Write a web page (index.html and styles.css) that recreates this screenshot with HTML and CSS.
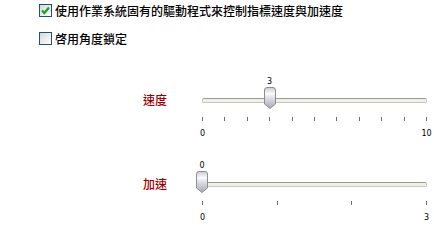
FILE: index.html
```html
<!DOCTYPE html>
<html lang="zh-Hant">
<head>
<meta charset="utf-8">
<title>指標設定</title>
<link rel="stylesheet" href="styles.css">
</head>
<body>
<div class="options">
  <label class="check-row">
    <span class="box checked">
      <svg width="11" height="11" viewBox="0 0 11 11"><path d="M2 5.5 L4.3 8 L9 2.5" fill="none" stroke="#1fa01f" stroke-width="2.2"/></svg>
    </span>
    <span class="check-text">使用作業系統固有的驅動程式來控制指標速度與加速度</span>
  </label>
  <label class="check-row">
    <span class="box"></span>
    <span class="check-text">啓用角度鎖定</span>
  </label>
</div>

<div class="sliders">
  <div class="slider-row">
    <div class="slider-label">速度</div>
    <div class="slider">
      <div class="value-row"><span class="value" style="left:30%">3</span></div>
      <div class="track-area">
        <div class="track"></div>
        <svg class="thumb" style="left:calc(30% - 6px)" width="12" height="22" viewBox="0 0 12 22">
          <defs>
            <linearGradient id="tg1" x1="0" y1="0" x2="0" y2="1">
              <stop offset="0" stop-color="#c9c9d2"/>
              <stop offset="0.3" stop-color="#fbfbfd"/>
              <stop offset="0.45" stop-color="#e4e4ea"/>
              <stop offset="1" stop-color="#a9a9b4"/>
            </linearGradient>
          </defs>
          <path d="M0.5 3 Q0.5 0.5 3 0.5 L9 0.5 Q11.5 0.5 11.5 3 L11.5 17 L6 21.5 L0.5 17 Z" fill="url(#tg1)" stroke="#8d8d98"/>
        </svg>
      </div>
      <div class="ticks">
        <i></i><i></i><i></i><i></i><i></i><i></i><i></i><i></i><i></i><i></i><i></i>
      </div>
      <div class="tick-labels"><span>0</span><span>10</span></div>
    </div>
  </div>

  <div class="slider-row">
    <div class="slider-label">加速</div>
    <div class="slider">
      <div class="value-row"><span class="value" style="left:0%">0</span></div>
      <div class="track-area">
        <div class="track"></div>
        <svg class="thumb" style="left:calc(0% - 6px)" width="12" height="22" viewBox="0 0 12 22">
          <defs>
            <linearGradient id="tg2" x1="0" y1="0" x2="0" y2="1">
              <stop offset="0" stop-color="#c9c9d2"/>
              <stop offset="0.3" stop-color="#fbfbfd"/>
              <stop offset="0.45" stop-color="#e4e4ea"/>
              <stop offset="1" stop-color="#a9a9b4"/>
            </linearGradient>
          </defs>
          <path d="M0.5 3 Q0.5 0.5 3 0.5 L9 0.5 Q11.5 0.5 11.5 3 L11.5 17 L6 21.5 L0.5 17 Z" fill="url(#tg2)" stroke="#8d8d98"/>
        </svg>
      </div>
      <div class="ticks"><i></i><i></i><i></i><i></i></div>
      <div class="tick-labels"><span>0</span><span>3</span></div>
    </div>
  </div>
</div>
</body>
</html>
```

FILE: styles.css
```css
html, body {
  margin: 0;
  padding: 0;
  background: #ffffff;
  width: 434px;
  height: 222px;
  overflow: hidden;
}

body {
  font-family: "Noto Sans CJK TC", "Noto Sans CJK SC", sans-serif;
  font-size: 12px;
  color: #000000;
}

.options {
  display: flex;
  flex-direction: column;
  gap: 15px;
  padding: 4px 0 0 39px;
}

.check-row {
  display: flex;
  align-items: center;
  gap: 3px;
  height: 13px;
}

.box {
  box-sizing: border-box;
  width: 13px;
  height: 13px;
  border: 1px solid #1c5180;
  background: linear-gradient(135deg, #d8d8d2 0%, #f4f4f2 70%, #ffffff 100%);
  display: flex;
  align-items: center;
  justify-content: center;
  flex: none;
}

.box svg {
  display: block;
}

.check-text {
  line-height: 13px;
  white-space: nowrap;
  font-weight: 500;
}

.sliders {
  margin-top: 33px;
  margin-left: 143px;
  display: flex;
  flex-direction: column;
  gap: 23px;
}

.slider-row {
  display: flex;
}

.slider-label {
  width: 53px;
  padding-top: 15px;
  line-height: 14px;
  color: #990000;
  font-size: 12px;
  font-weight: 500;
}

.slider {
  width: 225px;
  padding: 0 6px;
}

.value-row {
  position: relative;
  height: 9px;
}

.value {
  position: absolute;
  top: 0;
  transform: translateX(-50%);
  font-family: "DejaVu Sans", sans-serif;
  font-size: 8px;
  line-height: 8px;
}

.track-area {
  position: relative;
  height: 22px;
}

.track {
  box-sizing: border-box;
  position: relative;
  top: 11px;
  height: 5px;
  background: #f1f0e7;
  border: 1px solid #c6c6bd;
  border-top-color: #9a9a94;
  border-radius: 2px;
}

.thumb {
  position: absolute;
  top: 0;
  display: block;
}

.ticks {
  margin-top: 8px;
  height: 4px;
  display: flex;
  justify-content: space-between;
}

.ticks i {
  width: 1px;
  height: 4px;
  background: #6e6e6e;
}

.tick-labels {
  margin-top: 8px;
  height: 10px;
  display: flex;
  justify-content: space-between;
  font-family: "DejaVu Sans", sans-serif;
  font-size: 8px;
  line-height: 10px;
}

.tick-labels span {
  width: 1px;
  display: flex;
  justify-content: center;
  white-space: nowrap;
}
```
